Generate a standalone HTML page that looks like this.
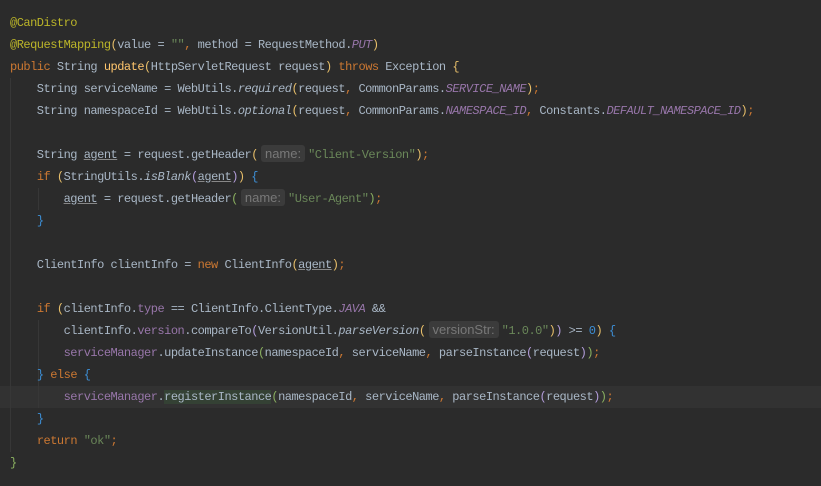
<!DOCTYPE html>
<html><head><meta charset="utf-8"><style>
html,body{margin:0;padding:0;background:#2b2b2b;width:821px;height:486px;overflow:hidden}
.c{position:absolute;left:10px;top:12px;font-family:"Liberation Mono","Noto Sans CJK SC",monospace;font-size:12px;letter-spacing:-0.5px;line-height:22px;color:#a9b7c6}
.l{height:22px;white-space:pre}
.k{color:#cc7832}.a{color:#bbb529}.s{color:#6a8759}.p{color:#9876aa}.pi{color:#9876aa;font-style:italic}
.f{color:#ffc66d}.i{font-style:italic}.u{text-decoration:underline;text-decoration-color:#888}
.y{color:#e8bf6a}.g{color:#8ab060}.b{color:#3d8fd6}.v{color:#b39ddb}
.h{display:inline-block;font-family:"Liberation Sans",sans-serif;font-size:13px;letter-spacing:0;line-height:17px;color:#787878;background:#3b3b3b;border-radius:3px;padding:0 4px;margin:0 3px;vertical-align:0}
.cur{position:absolute;left:0;top:386px;width:821px;height:22px;background:#323232}
.hl{background:#344134}
.g1{position:absolute;left:10px;top:78px;width:1px;height:374px;background:#373737}
.g2{position:absolute;left:38px;top:188px;width:1px;height:22px;background:#373737}
.g3{position:absolute;left:38px;top:320px;width:1px;height:88px;background:#373737}
</style></head><body>
<div class="cur"></div><div class="g1"></div><div class="g2"></div><div class="g3"></div>
<div class="c"><div class="l"><span class="a">@CanDistro</span></div><div class="l"><span class="a">@RequestMapping</span><span class="y">(</span>value = <span class="s">""</span><span class="k">,</span> method = RequestMethod.<span class="pi">PUT</span><span class="y">)</span></div><div class="l"><span class="k">public</span> String <span class="f">update</span><span class="y">(</span>HttpServletRequest request<span class="y">)</span> <span class="k">throws</span> Exception <span class="y">{</span></div><div class="l">    String serviceName = WebUtils.<span class="i">required</span><span class="y">(</span>request<span class="k">,</span> CommonParams.<span class="pi">SERVICE_NAME</span><span class="y">)</span><span class="k">;</span></div><div class="l">    String namespaceId = WebUtils.<span class="i">optional</span><span class="y">(</span>request<span class="k">,</span> CommonParams.<span class="pi">NAMESPACE_ID</span><span class="k">,</span> Constants.<span class="pi">DEFAULT_NAMESPACE_ID</span><span class="y">)</span><span class="k">;</span></div><div class="l"></div><div class="l">    String <span class="u">agent</span> = request.getHeader<span class="y">(</span><span class="h">name:</span><span class="s">"Client-Version"</span><span class="y">)</span><span class="k">;</span></div><div class="l">    <span class="k">if</span> <span class="y">(</span>StringUtils.<span class="i">isBlank</span><span class="v">(</span><span class="u">agent</span><span class="v">)</span><span class="y">)</span> <span class="b">{</span></div><div class="l">        <span class="u">agent</span> = request.getHeader<span class="g">(</span><span class="h">name:</span><span class="s">"User-Agent"</span><span class="g">)</span><span class="k">;</span></div><div class="l">    <span class="b">}</span></div><div class="l"></div><div class="l">    ClientInfo clientInfo = <span class="k">new</span> ClientInfo<span class="y">(</span><span class="u">agent</span><span class="y">)</span><span class="k">;</span></div><div class="l"></div><div class="l">    <span class="k">if</span> <span class="y">(</span>clientInfo.<span class="p">type</span> == ClientInfo.ClientType.<span class="pi">JAVA</span> &amp;&amp;</div><div class="l">        clientInfo.<span class="p">version</span>.compareTo<span class="v">(</span>VersionUtil.<span class="i">parseVersion</span><span class="y">(</span><span class="h">versionStr:</span><span class="s">"1.0.0"</span><span class="y">)</span><span class="v">)</span> &gt;= <span class="b">0</span><span class="y">)</span> <span class="b">{</span></div><div class="l">        <span class="p">serviceManager</span>.updateInstance<span class="g">(</span>namespaceId<span class="k">,</span> serviceName<span class="k">,</span> parseInstance<span class="v">(</span>request<span class="v">)</span><span class="g">)</span><span class="k">;</span></div><div class="l">    <span class="b">}</span> <span class="k">else</span> <span class="b">{</span></div><div class="l">        <span class="p">serviceManager</span>.<span class="hl">registerInstance</span><span class="g">(</span>namespaceId<span class="k">,</span> serviceName<span class="k">,</span> parseInstance<span class="v">(</span>request<span class="v">)</span><span class="g">)</span><span class="k">;</span></div><div class="l">    <span class="b">}</span></div><div class="l">    <span class="k">return</span> <span class="s">"ok"</span><span class="k">;</span></div><div class="l"><span class="g">}</span></div></div>
</body></html>
